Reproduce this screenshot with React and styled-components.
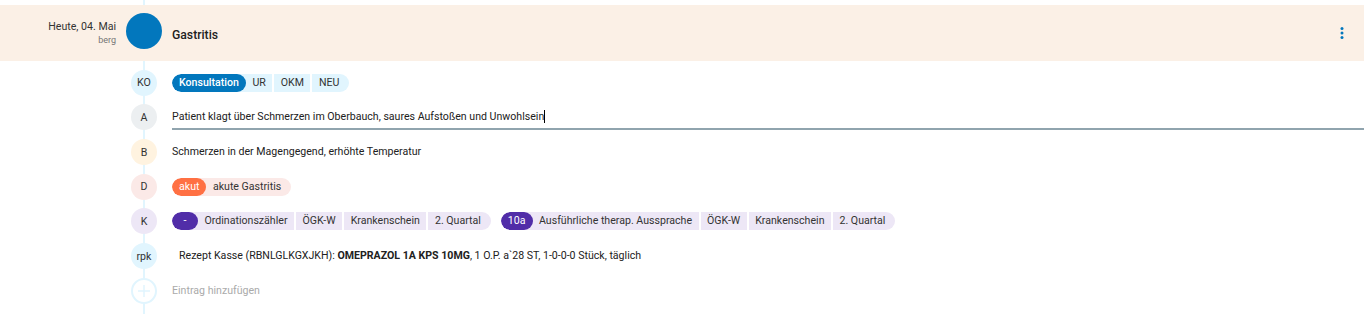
import React from "react";
import styled, { createGlobalStyle } from "styled-components";

const Global = createGlobalStyle`
  html, body { margin: 0; padding: 0; background: #fff; }
  body { font-family: Roboto, "Noto Sans", sans-serif; color: #212121; }
`;

const Page = styled.div`
  width: 1364px;
  min-height: 314px;
  box-sizing: border-box;
  padding-top: 5px;
  background: linear-gradient(#e1f5fe, #e1f5fe) no-repeat 143px 0 / 2px 100%;
`;

const Header = styled.div`
  height: 56px;
  background: #fbf0e6;
  display: flex;
  align-items: center;
`;

const DateCol = styled.div`
  width: 116px;
  text-align: right;
  display: flex;
  flex-direction: column;
`;

const DateText = styled.span`
  font-size: 10.6px;
  line-height: 14px;
  color: #333;
`;

const Author = styled.span`
  font-size: 9px;
  line-height: 12px;
  color: #757575;
`;

const BigDot = styled.div`
  width: 36px;
  height: 36px;
  border-radius: 50%;
  background: #0277bd;
  margin: 0 10px 4px 10px;
  flex: none;
`;

const Title = styled.div`
  flex: 1;
  font-size: 12.2px;
  font-weight: 500;
  color: #212121;
  margin-top: 3px;
`;

const Kebab = styled.svg`
  width: 18px;
  height: 18px;
  margin-right: 13px;
  fill: #0277bd;
`;

const List = styled.div`
  margin-top: 4.5px;
`;

const Row = styled.div`
  height: 34.67px;
  display: flex;
  align-items: center;
  padding-left: 131px;
  gap: 15px;
`;

const Badge = styled.div`
  width: 26px;
  height: 26px;
  border-radius: 50%;
  flex: none;
  box-sizing: border-box;
  background: ${(p) => p.$bg};
  border: ${(p) => (p.$ring ? "2px solid #e1f5fe" : "none")};
  display: flex;
  align-items: center;
  justify-content: center;
  font-size: 10.6px;
  color: #333;
`;

const Text = styled.div`
  font-size: 10.6px;
  line-height: 20px;
  color: ${(p) => (p.$muted ? "#aaa" : "#212121")};
  padding-left: ${(p) => p.$indent || 0}px;
  white-space: nowrap;
`;

const InputLine = styled.div`
  flex: 1;
  box-sizing: border-box;
  height: 26px;
  padding: 3px 0 1px;
  border-bottom: 2px solid #90a4ae;
  font-size: 10.6px;
  line-height: 20px;
  color: #212121;
  white-space: nowrap;
`;

const Caret = styled.span`
  display: inline-block;
  width: 1px;
  height: 13px;
  background: #000;
  vertical-align: -3px;
`;

const Chips = styled.div`
  display: flex;
  gap: 10px;
`;

const Group = styled.div`
  display: inline-flex;
  align-items: stretch;
  height: 18px;
  border-radius: 9px;
  background: ${(p) => p.$bg};
  overflow: hidden;
`;

const Lead = styled.span`
  min-width: 26px;
  box-sizing: border-box;
  padding: 0 7px;
  border-radius: 9px;
  background: ${(p) => p.$bg};
  color: #fff;
  font-weight: ${(p) => (p.$bold ? 500 : 400)};
  font-size: 10.6px;
  line-height: 18px;
  text-align: center;
`;

const Seg = styled.span`
  padding: 0 6.5px;
  font-size: 10.6px;
  line-height: 18px;
  color: #333;
  & + & { border-left: 2px solid #fff; }
  &:first-of-type { padding-left: 4px; }
  &:last-child { padding-right: 10px; }
`;

const Strong = styled.b`
  font-weight: 700;
`;

function ChipGroup({ lead, leadBg, bg, bold, items }) {
  return (
    <Group $bg={bg}>
      <Lead $bg={leadBg} $bold={bold}>{lead}</Lead>
      {items.map((t) => (
        <Seg key={t}>{t}</Seg>
      ))}
    </Group>
  );
}

export default function App() {
  return (
    <>
      <Global />
      <Page>
        <Header>
          <DateCol>
            <DateText>Heute, 04. Mai</DateText>
            <Author>berg</Author>
          </DateCol>
          <BigDot />
          <Title>Gastritis</Title>
          <Kebab viewBox="0 0 24 24">
            <circle cx="12" cy="6" r="2" />
            <circle cx="12" cy="12" r="2" />
            <circle cx="12" cy="18" r="2" />
          </Kebab>
        </Header>
        <List>
          <Row>
            <Badge $bg="#e1f5fe">KO</Badge>
            <ChipGroup lead="Konsultation" leadBg="#0277bd" bg="#e1f5fe" bold items={["UR", "OKM", "NEU"]} />
          </Row>
          <Row>
            <Badge $bg="#eceff1">A</Badge>
            <InputLine>
              Patient klagt über Schmerzen im Oberbauch, saures Aufstoßen und Unwohlsein<Caret />
            </InputLine>
          </Row>
          <Row>
            <Badge $bg="#fff3e0">B</Badge>
            <Text>Schmerzen in der Magengegend, erhöhte Temperatur</Text>
          </Row>
          <Row>
            <Badge $bg="#fbe9e7">D</Badge>
            <ChipGroup lead="akut" leadBg="#ff7043" bg="#fbe9e7" items={["akute Gastritis"]} />
          </Row>
          <Row>
            <Badge $bg="#ede7f6">K</Badge>
            <Chips>
              <ChipGroup lead="-" leadBg="#512da8" bg="#ede7f6" items={["Ordinationszähler", "ÖGK-W", "Krankenschein", "2. Quartal"]} />
              <ChipGroup lead="10a" leadBg="#512da8" bg="#ede7f6" items={["Ausführliche therap. Aussprache", "ÖGK-W", "Krankenschein", "2. Quartal"]} />
            </Chips>
          </Row>
          <Row>
            <Badge $bg="#e1f5fe">rpk</Badge>
            <Text $indent={7}>
              Rezept Kasse (RBNLGLKGXJKH): <Strong>OMEPRAZOL 1A KPS 10MG</Strong>, 1 O.P. a`28 ST, 1-0-0-0 Stück, täglich
            </Text>
          </Row>
          <Row>
            <Badge $bg="#fff" $ring>
              <svg width="14" height="14" viewBox="0 0 14 14">
                <path d="M7 1v12M1 7h12" stroke="#e1f5fe" strokeWidth="1.5" />
              </svg>
            </Badge>
            <Text $muted>Eintrag hinzufügen</Text>
          </Row>
        </List>
      </Page>
    </>
  );
}
